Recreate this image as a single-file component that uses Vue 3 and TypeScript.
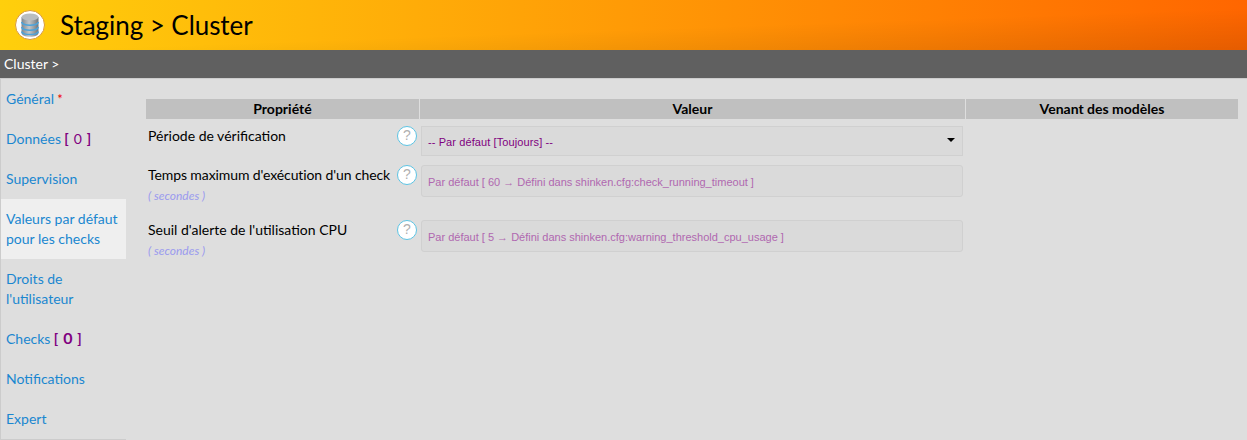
<script setup lang="ts">
interface NavItem { label: string; count?: number; star?: boolean; active?: boolean; big?: boolean }
const nav: NavItem[] = [
  { label: 'Général', star: true },
  { label: 'Données', count: 0 },
  { label: 'Supervision' },
  { label: 'Valeurs par défaut pour les checks', active: true },
  { label: "Droits de l'utilisateur" },
  { label: 'Checks', count: 0, big: true },
  { label: 'Notifications' },
  { label: 'Expert' },
]
</script>

<template>
  <div class="page">
    <header class="top">
      <span class="logo">
        <svg width="18" height="24" viewBox="0 0 18 24">
          <defs>
            <linearGradient id="cyl" x1="0" x2="1" y1="0" y2="0">
              <stop offset="0" stop-color="#7f868c" />
              <stop offset="0.45" stop-color="#c2c6c9" />
              <stop offset="1" stop-color="#6f757a" />
            </linearGradient>
          </defs>
          <path d="M0.500 4v16c0 2.200 3.800 3.800 8.500 3.800s8.500-1.600 8.500-3.800V4z" fill="url(#cyl)" />
          <ellipse cx="9" cy="4" rx="8.500" ry="3.500" fill="#b9bdc1" />
          <path d="M0.500 9c1 2.400 4.500 3.200 8.500 3.200S16.500 11.400 17.500 9M0.500 14c1 2.400 4.500 3.200 8.500 3.200s7.500-.8 8.500-3.200M0.500 18.500c1 2.400 4.500 3 8.500 3s7.500-.6 8.500-3" fill="none" stroke="#4aa3dc" stroke-width="1.500" />
        </svg>
      </span>
      <h1>Staging &gt; Cluster</h1>
    </header>
    <div class="crumb">Cluster &gt;</div>
    <div class="body">
      <nav class="side">
        <a v-for="n in nav" :key="n.label" class="item" :class="{ active: n.active }">
          <span>{{ n.label }}</span>
          <span v-if="n.star" class="star"> *</span>
          <span v-if="n.count !== undefined" class="count" :class="{ big: n.big }"> [ <b>{{ n.count }}</b> ]</span>
        </a>
      </nav>
      <main class="content">
        <div class="grid">
          <div class="th">Propriété</div>
          <div class="th">Valeur</div>
          <div class="th">Venant des modèles</div>

          <div class="prop r1">
            <div class="lab">Période de vérification</div>
            <span class="help">?</span>
          </div>
          <div class="val r1">
            <div class="select">
              <span>-- Par défaut [Toujours] --</span>
              <i class="caret"></i>
            </div>
          </div>
          <div></div>

          <div class="prop r2">
            <div class="lab tight">Temps maximum d'exécution d'un check<div class="unit">( secondes )</div></div>
            <span class="help">?</span>
          </div>
          <div class="val r2">
            <div class="input">Par défaut [ 60 → Défini dans shinken.cfg:check_running_timeout ]</div>
          </div>
          <div></div>

          <div class="prop r2">
            <div class="lab">Seuil d'alerte de l'utilisation CPU<div class="unit">( secondes )</div></div>
            <span class="help">?</span>
          </div>
          <div class="val r2">
            <div class="input">Par défaut [ 5 → Défini dans shinken.cfg:warning_threshold_cpu_usage ]</div>
          </div>
          <div></div>
        </div>
      </main>
    </div>
  </div>
</template>

<style>
html, body { margin: 0; background: #dedede; }
</style>

<style scoped>
.page {
  width: 1247px;
  height: 440px;
  overflow: hidden;
  background: #dedede;
  font-family: Lato, "Liberation Sans", sans-serif;
  display: flex;
  flex-direction: column;
}
.top {
  height: 50px;
  flex: none;
  display: flex;
  align-items: center;
  padding-left: 15px;
  background:
    linear-gradient(178deg, rgba(0, 0, 0, 0) 55%, rgba(0, 0, 0, 0.1) 100%),
    linear-gradient(to right, #ffcf0c 0%, #ff6600 100%);
}
.logo {
  width: 30px;
  height: 30px;
  box-sizing: border-box;
  border-radius: 50%;
  background: #fff;
  border: 1.500px solid #d99a3a;
  display: flex;
  align-items: center;
  justify-content: center;
  flex: none;
}
h1 {
  margin: 0 0 0 15px;
  font-size: 26px;
  font-weight: 400;
  color: #000;
  line-height: 50px;
  letter-spacing: -0.06px;
}
.crumb {
  height: 29px;
  flex: none;
  box-sizing: border-box;
  background: #606060;
  color: #fff;
  font-size: 14px;
  line-height: 28px;
  padding-left: 4px;
  border-bottom: 1px solid #ccc;
}
.body { flex: 1; display: flex; min-height: 0; }
.side {
  width: 125px;
  flex: none;
  border-left: 1px solid #ccc;
  border-bottom: 1px solid #ccc;
  height: 360px;
  display: flex;
  flex-direction: column;
}
.item {
  display: block;
  padding: 10px 5px;
  font-size: 14px;
  line-height: 20px;
  color: #1a87d0;
}
.item.active { background: #efefef; }
.star { color: #e00; font-size: 13px; }
.count { color: #800080; font-size: 14px; font-weight: 700; }
.count b { font-weight: 400; font-family: Lato, sans-serif; padding: 0 1.500px; line-height: 0; }
.count.big b { font-size: 16px; font-weight: 700; }
.content { flex: 1; padding: 20px 9px 0 20px; min-width: 0; }
.grid {
  display: grid;
  grid-template-columns: 273px 545px 272px;
  column-gap: 1px;
  grid-template-rows: 20px auto auto auto;
}
.th {
  background: #c0c0c0;
  height: 20px;
  line-height: 20px;
  text-align: center;
  font-size: 14px;
  font-weight: 700;
  color: #000;
}
.prop {
  display: flex;
  justify-content: space-between;
  padding: 7px 2px 0 2px;
  font-size: 14px;
  color: #000;
  box-sizing: border-box;
}
.lab { line-height: 20px; white-space: nowrap; }
.lab.tight { letter-spacing: -0.1px; }
.unit {
  font-size: 12px;
  font-style: italic;
  color: #9a9aee;
  line-height: 20px;
  margin-top: 1px;
  letter-spacing: 0;
}
.help {
  width: 20px;
  height: 20px;
  box-sizing: border-box;
  border-radius: 50%;
  background: #fff;
  border: 1.500px solid #5cc4e4;
  color: #b0b0b0;
  font-size: 14px;
  line-height: 17px;
  text-align: center;
  flex: none;
  font-family: "Liberation Sans", sans-serif;
}
.r1 { height: 39px; }
.r2 { height: 55px; }
.val { padding: 7px 2px 0 1px; box-sizing: border-box; }
.select {
  height: 30px;
  box-sizing: border-box;
  background: #dadada;
  border: 1px solid #d0d0d0;
  padding: 2px 6px 0;
  display: flex;
  align-items: center;
  justify-content: space-between;
  color: #800080;
  font-size: 11px;
  letter-spacing: 0.1px;
  font-family: "Liberation Sans", Arial, sans-serif;
}
.caret {
  width: 0;
  height: 0;
  border-left: 4px solid transparent;
  border-right: 4px solid transparent;
  border-top: 4px solid #000;
  margin: -4px 1px 0 0;
}
.input {
  height: 32px;
  box-sizing: border-box;
  background: #dadada;
  border: 1px solid #d0d0d0;
  border-radius: 3px;
  padding: 0 6px;
  line-height: 32px;
  color: #b068b0;
  font-size: 11px;
  font-family: "Liberation Sans", Arial, sans-serif;
  white-space: nowrap;
}
</style>
